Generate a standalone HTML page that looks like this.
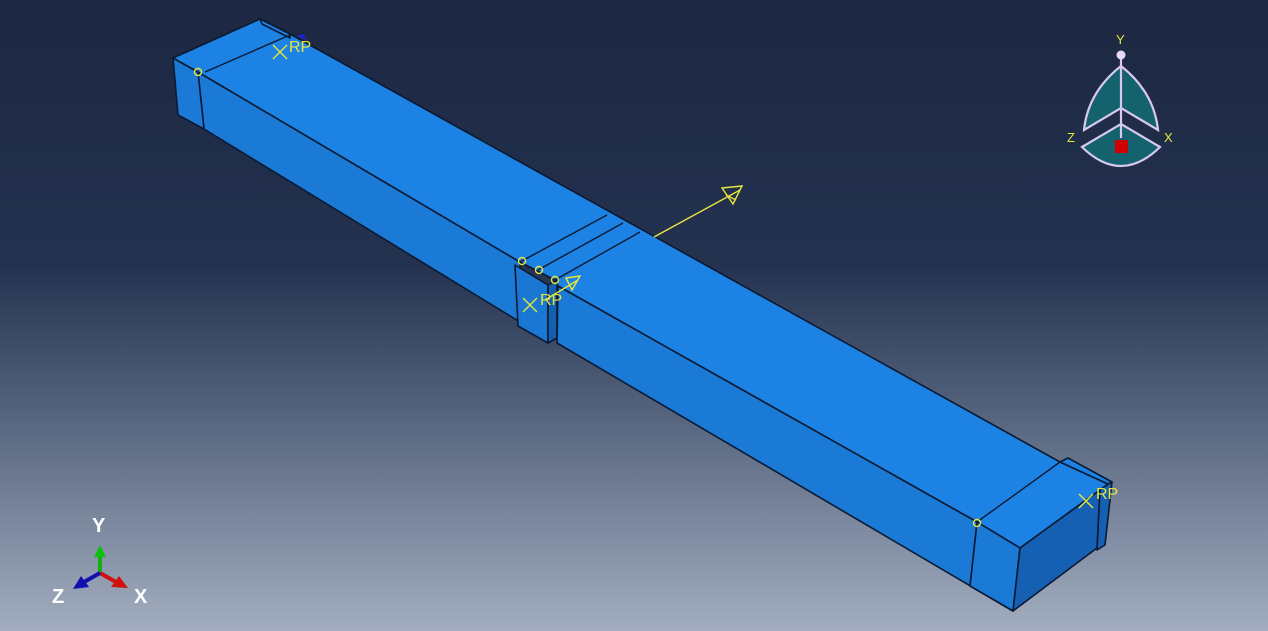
<!DOCTYPE html>
<html><head><meta charset="utf-8"><style>
html,body{margin:0;padding:0;}
body{width:1268px;height:631px;overflow:hidden;background:linear-gradient(to bottom,#1c2741 0%,#243250 42%,#56647e 66%,#a2adbf 100%);}
svg{position:absolute;left:0;top:0;}
text{font-family:"Liberation Sans",sans-serif;}
</style></head><body>
<svg width="1268" height="631" viewBox="0 0 1268 631">
<g stroke="#0b1a33" stroke-width="1.6" stroke-linejoin="round">
<polygon points="198,72 520,262 520,322 204,129" fill="#1a7ad6"/>
<polygon points="173,58 198,72 204,129 178,115" fill="#1a7ad6"/>
<polygon points="173,58 260,19 290,34 1060,462 1108,484 1020,548 977,522 558,286 555,280 520,262 198,72" fill="#1c82e4"/>
<polygon points="260,19 290,34 290,38 262,24" fill="#1c82e4"/>
<polygon points="515,265 548,285 548,343 518,326" fill="#1a78d4"/>
<polygon points="548,285 557,280 557,338 548,343" fill="#145fae"/>
<polygon points="558,286 977,522 1020,548 1013,611 557,343" fill="#1a7ad6"/>
<polygon points="977,522 1020,548 1013,611 970,586" fill="#1a7ad6"/>
<polygon points="1020,548 1100,490 1097,548 1013,611" fill="#1560b2"/>
<polygon points="1060,462 1068,458 1112,482 1108,484" fill="#1c82e4"/>
<polygon points="1100,490 1108,484 1112,482 1105,545 1097,550" fill="#1560b2"/>
</g>
<g stroke="#0b1a33" stroke-width="1.4" fill="none">
<line x1="205" y1="72" x2="290" y2="35"/>
<line x1="520" y1="262" x2="607" y2="215"/>
<line x1="538" y1="270" x2="623" y2="223"/>
<line x1="555" y1="280" x2="640" y2="232"/>
<line x1="977" y1="522" x2="1060" y2="462"/>
<line x1="977" y1="522" x2="970" y2="586"/>
</g>
<g stroke="#e6e640" fill="none" stroke-width="1.4">
<circle cx="198" cy="72" r="3.5"/>
<circle cx="522" cy="261" r="3.5"/>
<circle cx="539" cy="270" r="3.5"/>
<circle cx="555" cy="280" r="3.5"/>
<circle cx="977" cy="523" r="3.5"/>
<path d="M273,45 L287,59 M273,59 L287,45"/>
<path d="M523,298 L537,312 M523,312 L537,298"/>
<path d="M1079,494 L1093,508 M1079,508 L1093,494"/>
<line x1="654" y1="237" x2="740" y2="190"/>
<path d="M722,188 L742,186 L733,204 Z M726,195 L736,200"/>
<line x1="545" y1="300" x2="578" y2="280"/>
<path d="M566,278 L580,276 L572,290 Z"/>
</g>
<g fill="#e6e640" font-size="16">
<text x="289" y="52">RP</text>
<text x="540" y="305">RP</text>
<text x="1096" y="499">RP</text>
</g>
<path d="M296,36 L304,34 L306,40 Z" fill="#2020d0"/>
<g stroke="#d8c8f0" stroke-width="2.2" fill="#15626f">
<path d="M1121,66 Q1088,92 1084,130 L1121,108 L1158,130 Q1154,92 1121,66 Z"/>
<path d="M1082,147 L1121,124 L1160,147 Q1121,185 1082,147 Z"/>
<line x1="1121" y1="58" x2="1121" y2="138"/>
</g>
<circle cx="1121" cy="55" r="4.5" fill="#e8d8f8"/>
<rect x="1115" y="140" width="13" height="13" fill="#d00000"/>
<g fill="#e6e640" font-size="13">
<text x="1116" y="44">Y</text>
<text x="1067" y="142">Z</text>
<text x="1164" y="142">X</text>
</g>
<line x1="100" y1="573" x2="100" y2="556" stroke="#10b010" stroke-width="4"/>
<polygon points="94,557 100,545 106,557" fill="#10c010"/>
<line x1="100" y1="573" x2="116" y2="582" stroke="#d01010" stroke-width="4"/>
<polygon points="111,587 128,588 119,576" fill="#d01010"/>
<line x1="100" y1="573" x2="84" y2="582" stroke="#1010b0" stroke-width="4"/>
<polygon points="89,587 73,589 81,576" fill="#1010b0"/>
<g fill="#ffffff" font-size="20" font-weight="bold">
<text x="92" y="532">Y</text>
<text x="52" y="603">Z</text>
<text x="134" y="603">X</text>
</g>
</svg>
</body></html>
